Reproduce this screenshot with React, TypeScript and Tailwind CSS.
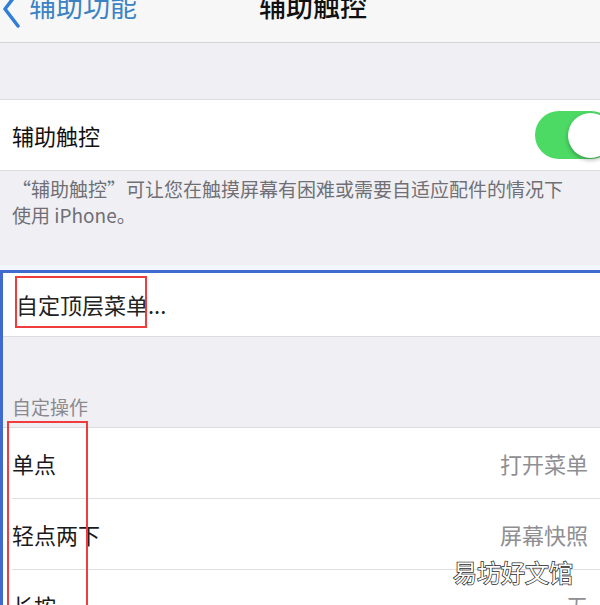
const rows = [
  { label: '单点', value: '打开菜单' },
  { label: '轻点两下', value: '屏幕快照' },
  { label: '长按', value: '无' },
];

export default function App() {
  return (
    <div className="relative w-[600px] h-[605px] overflow-hidden bg-[#efeff4] font-['Noto_Sans_CJK_SC','Noto_Sans',sans-serif] text-[#111]">
      {/* nav bar */}
      <div className="h-[43px] bg-[#f7f7f7] border-b border-[#d3d3d8] flex items-start overflow-hidden">
        <div className="flex items-start -mt-[8px]">
          <svg viewBox="0 0 20 40" className="w-[20px] h-[40px] ml-[1px]" fill="none">
            <path d="M17 0 L4 17 L17 34" stroke="#2f7fd6" strokeWidth="3.5" strokeLinecap="round" strokeLinejoin="round" />
          </svg>
          <span className="ml-[8px] text-[27px] leading-[27px] text-[#3b82c4]">辅助功能</span>
        </div>
        <span className="ml-[122px] -mt-[8px] text-[27px] leading-[27px] font-medium text-[#111]">辅助触控</span>
      </div>

      <div className="h-[56px]" />

      {/* toggle row */}
      <div className="h-[72px] bg-white border-y border-[#dcdce0] flex items-center pl-[12px] overflow-hidden">
        <span className="text-[22px]">辅助触控</span>
        <div className="ml-auto mr-[-15px] w-[80px] h-[48px] rounded-full bg-[#4cd964] flex items-center justify-end pr-[2px] shrink-0">
          <div className="w-[45px] h-[45px] rounded-full bg-white shadow-[0_2px_4px_rgba(0,0,0,0.3)]" />
        </div>
      </div>

      {/* footer note */}
      <div className="h-[94px] px-[12px] pt-[5px] text-[19px] leading-[26px] text-[#6f6f75]">
        “辅助触控”可让您在触摸屏幕有困难或需要自适应配件的情况下
        <br />
        使用 iPhone。
      </div>
      <div className="h-[5px] bg-[#f3f6fa]" />

      {/* highlighted block */}
      <div className="border-t-[3px] border-l-[3px] border-[#3f6bd0]">
        <div className="h-[64px] bg-white border-b border-[#dcdce0] flex items-center pl-[13px]">
          <span className="text-[22px] text-[#222]">自定顶层菜单...</span>
        </div>

        <div className="h-[90px] flex items-end pl-[9px] pb-[7px]">
          <span className="text-[19px] leading-[26px] text-[#8a8a8f]">自定操作</span>
        </div>

        <div className="bg-white border-t border-[#dcdce0]">
          {rows.map((r, i) => (
            <div key={r.label} className="pl-[9px]">
              <div className={i < rows.length - 1 ? 'h-[71px] flex items-center pr-[12px] border-b border-[#e0e0e4]' : 'h-[71px] flex items-center pr-[12px]'}>
                <span className="text-[22px] text-[#1a1a1a]">{r.label}</span>
                <span className="ml-auto text-[22px] text-[#8e8e93]">{r.value}</span>
              </div>
            </div>
          ))}
        </div>
      </div>

      {/* annotation boxes */}
      <div className="absolute left-[15px] top-[276px] w-[132px] h-[52px] border-2 border-[#f03c3c]" />
      <div className="absolute left-[7px] top-[421px] w-[81px] h-[200px] border-2 border-[#f03c3c]" />

      {/* watermark */}
      <div className="absolute left-[453px] top-[560px] text-[24px] leading-[24px] text-white [-webkit-text-stroke:1.5px_#2a2a2a] [paint-order:stroke_fill]">
        易坊好文馆
      </div>
    </div>
  );
}
